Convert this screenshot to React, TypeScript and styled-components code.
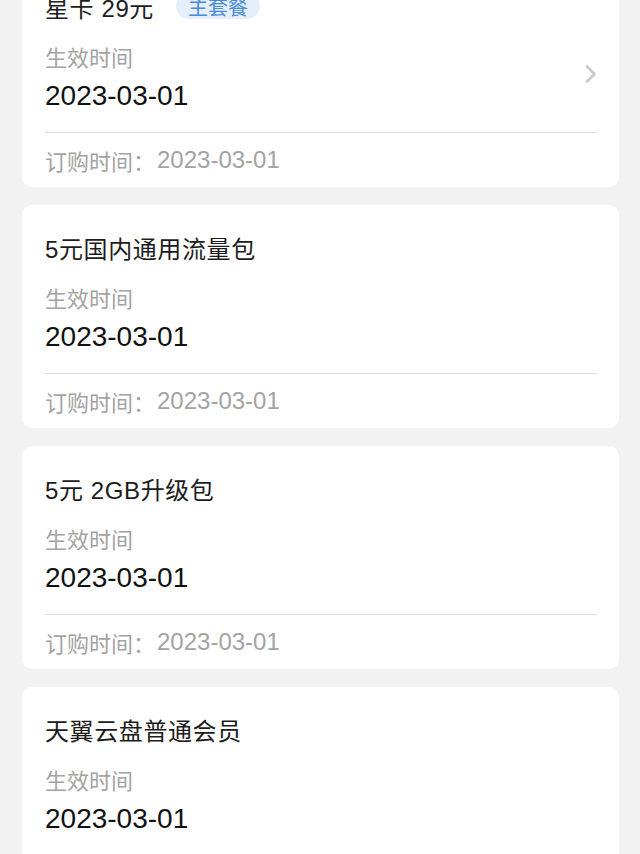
import React from 'react';
import styled, { createGlobalStyle } from 'styled-components';

const GlobalStyle = createGlobalStyle`
    html, body {
        margin: 0;
        padding: 0;
        background: #f2f2f2;
        font-family: "Liberation Sans", "Noto Sans CJK SC", sans-serif;
    }
`;

const Page = styled.div`
    width: 640px;
    height: 854px;
    overflow: hidden;
    background: #f2f2f2;
`;

// the list is scrolled, first card is partly above the viewport
const List = styled.ul`
    list-style: none;
    margin: -36px 0 0;
    padding: 0 21px 0 22px;
    display: flex;
    flex-direction: column;
    gap: 18px;
`;

const Card = styled.li`
    background: #fff;
    border-radius: 10px;
    height: 223px;
    box-sizing: border-box;
    padding: 0 22px 0 23px;
    display: flex;
    flex-direction: column;
`;

const TitleRow = styled.div`
    display: flex;
    align-items: center;
    gap: 22px;
    height: 84px;
`;

const Title = styled.div`
    font-size: 24px;
    color: #1c1c1c;
    letter-spacing: 0.6px;
`;

const Tag = styled.span`
    display: inline-flex;
    align-items: center;
    height: 26px;
    padding: 0 12px;
    border-radius: 13px;
    background: #e5effb;
    color: #4b8bd6;
    font-size: 20px;
`;

const Body = styled.div`
    display: flex;
    align-items: center;
    justify-content: space-between;
    height: 84px;
    border-bottom: 1.5px solid #dcdcdc;
`;

const Info = styled.div`
    display: flex;
    flex-direction: column;
    gap: 6px;
    margin-top: -22px;
`;

const Label = styled.div`
    font-size: 22px;
    color: #a3a3a3;
    line-height: 28px;
`;

const DateText = styled.div`
    font-size: 28px;
    color: #111;
    line-height: 34px;
`;

const Chevron = styled.svg`
    width: 14px;
    height: 20px;
    margin-right: -1px;
    margin-top: -32px;
`;

const Footer = styled.div`
    display: flex;
    align-items: center;
    flex: 1;
    font-size: 22px;
    color: #a3a3a3;
`;

const OrderDate = styled.span`
    font-size: 24px;
    margin-left: 2px;
`;

type Plan = {
    name: string;
    tag?: string;
    start: string;
    ordered: string;
    link?: boolean;
};

const plans: Plan[] = [
    { name: '星卡 29元', tag: '主套餐', start: '2023-03-01', ordered: '2023-03-01', link: true },
    { name: '5元国内通用流量包', start: '2023-03-01', ordered: '2023-03-01' },
    { name: '5元 2GB升级包', start: '2023-03-01', ordered: '2023-03-01' },
    { name: '天翼云盘普通会员', start: '2023-03-01', ordered: '2023-03-01' },
];

const PlanCard = ({ plan }: { plan: Plan }) => (
    <Card>
        <TitleRow>
            <Title>{plan.name}</Title>
            {plan.tag && <Tag>{plan.tag}</Tag>}
        </TitleRow>
        <Body>
            <Info>
                <Label>生效时间</Label>
                <DateText>{plan.start}</DateText>
            </Info>
            {plan.link && (
                <Chevron viewBox="0 0 14 20">
                    <path d="M3 2.5 L10.5 10 L3 17.5" fill="none" stroke="#c9c9c9" strokeWidth="2.6" strokeLinecap="round" strokeLinejoin="round" />
                </Chevron>
            )}
        </Body>
        <Footer>
            订购时间：<OrderDate>{plan.ordered}</OrderDate>
        </Footer>
    </Card>
);

export default function App() {
    return (
        <Page>
            <GlobalStyle />
            <List>
                {plans.map((p, i) => (
                    <PlanCard key={i} plan={p} />
                ))}
            </List>
        </Page>
    );
}
